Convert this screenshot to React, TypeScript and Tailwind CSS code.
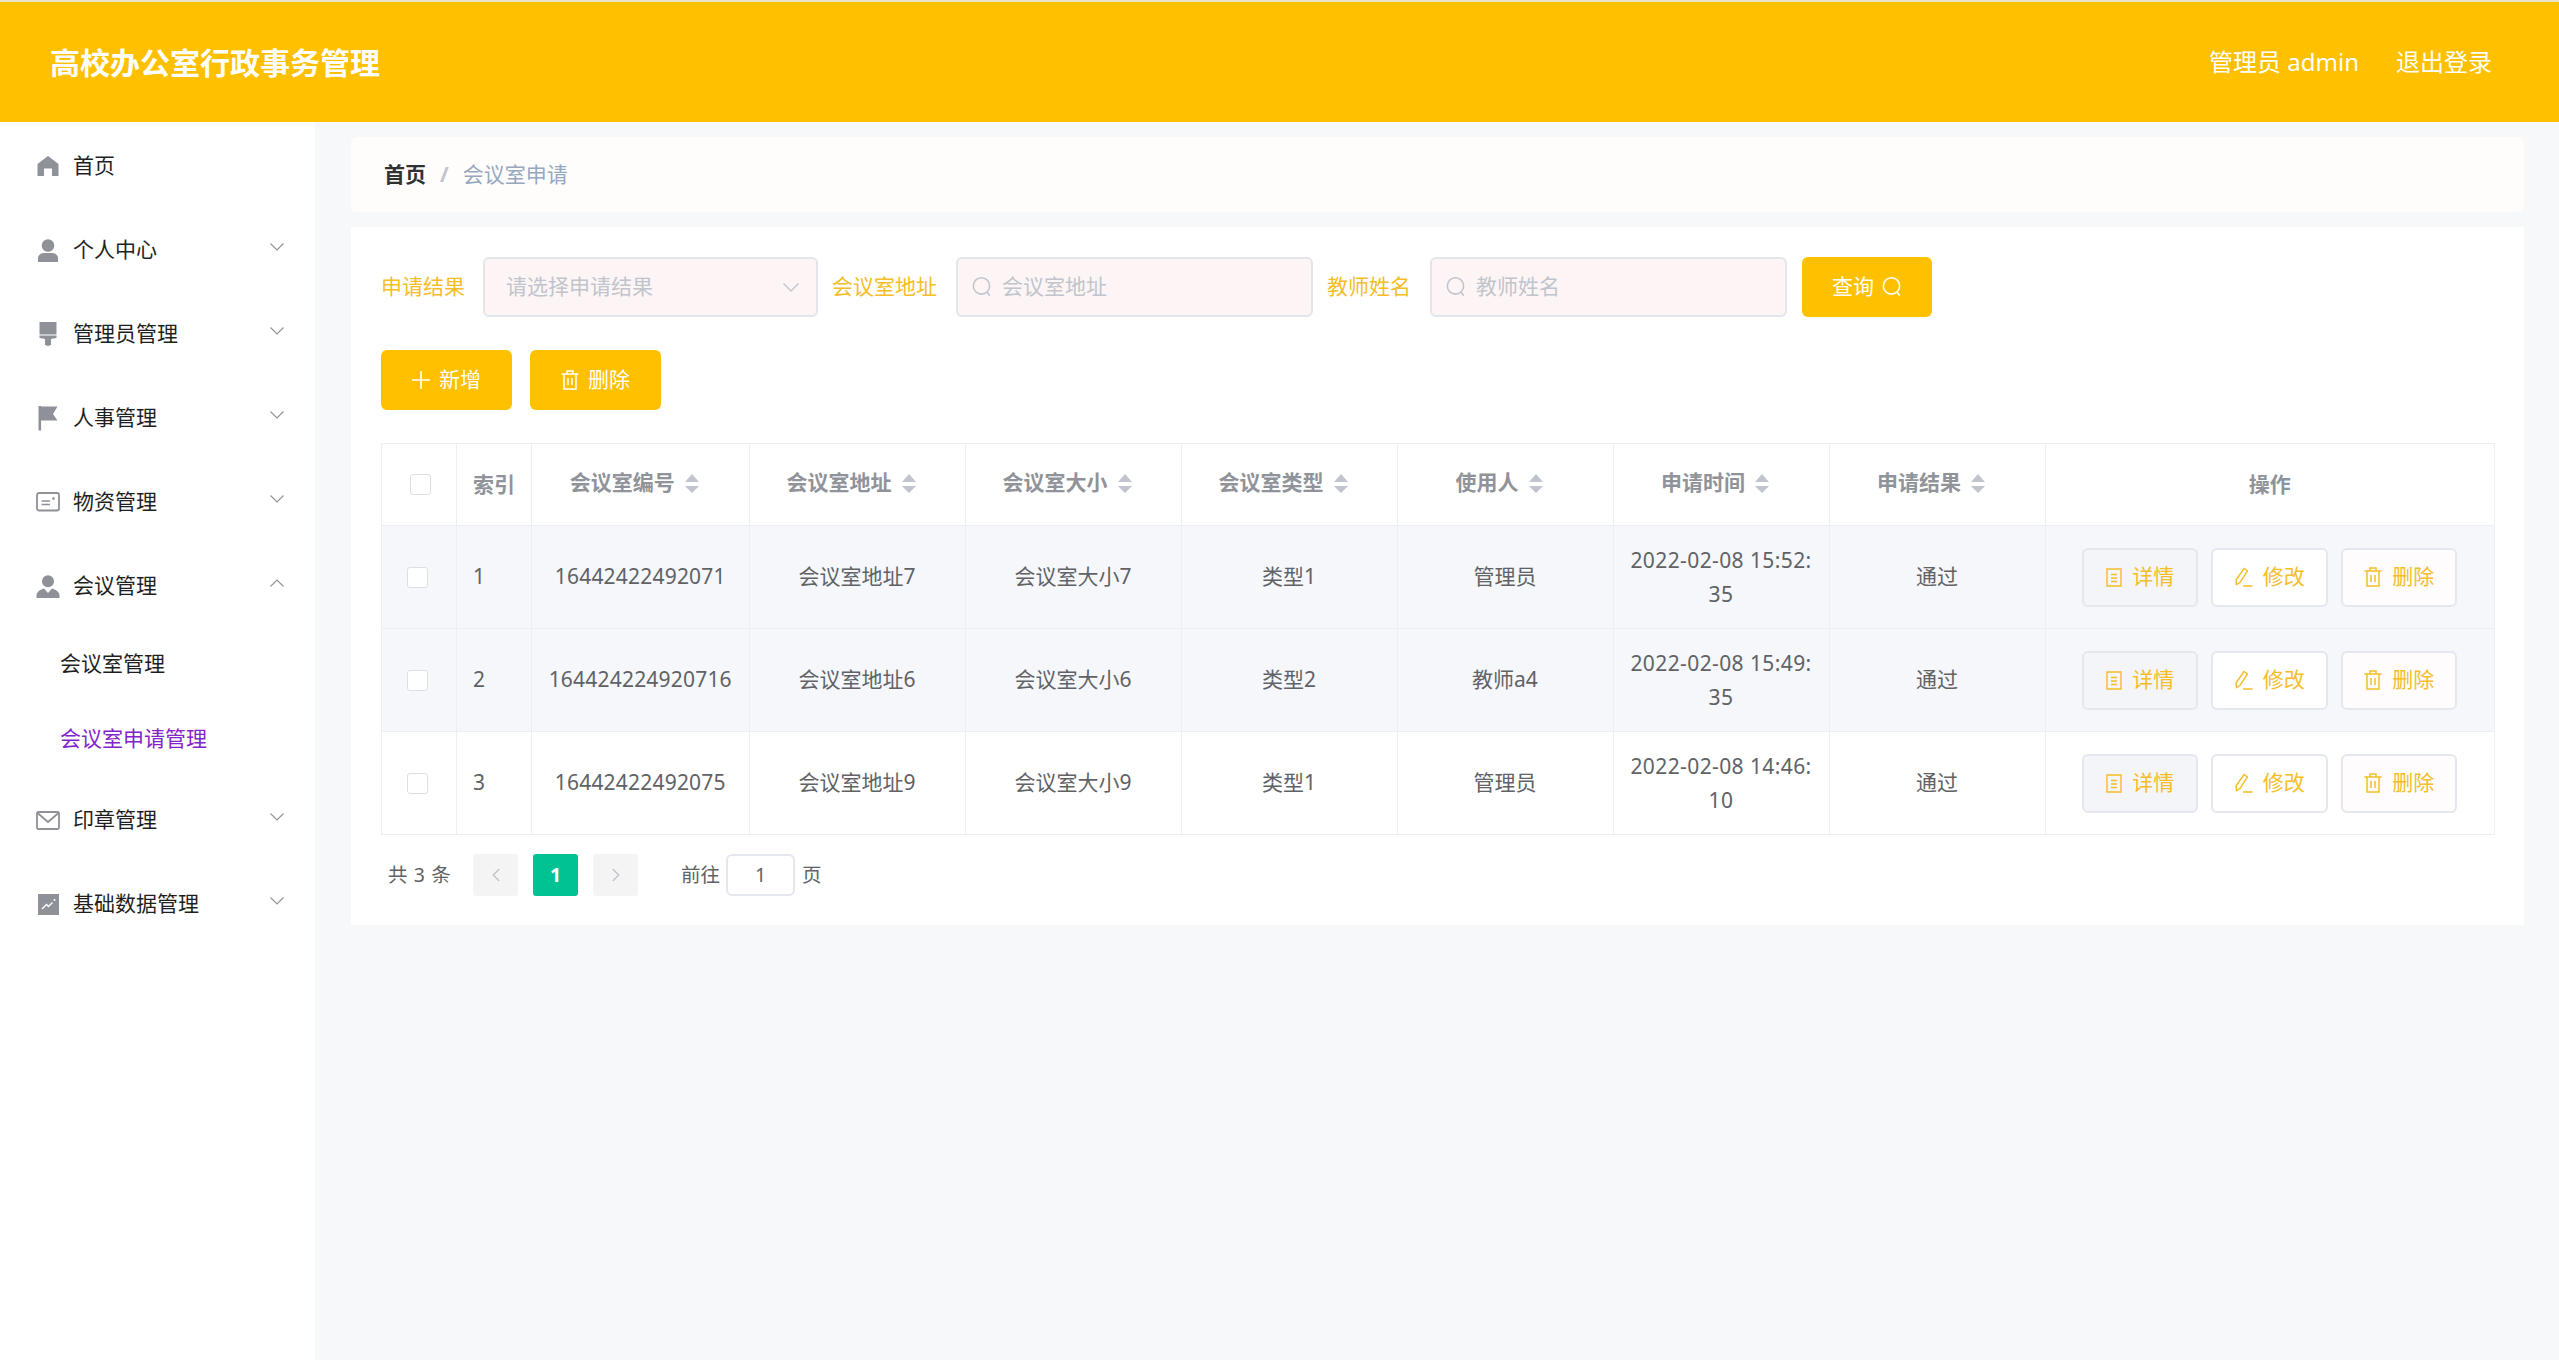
import { ChevronLeft, ChevronRight } from "lucide-react"

const gray = "#8f9199"

function IconHome() {
  return (
    <svg width="22" height="20" viewBox="0 0 22 20" fill={gray}>
      <path d="M11 0 L21.5 8 V20 H15 V12.5 H7 V20 H0.5 V8 Z" />
    </svg>
  )
}
function IconUser() {
  return (
    <svg width="22" height="23" viewBox="0 0 22 23" fill={gray}>
      <circle cx="11" cy="6.5" r="6.3" />
      <path d="M1 23 V19 C1 16 4 14 7 14 H15 C18 14 21 16 21 19 V23 Z" />
    </svg>
  )
}
function IconBrush() {
  return (
    <svg width="20" height="24" viewBox="0 0 20 24" fill={gray}>
      <rect x="1.5" y="0" width="17" height="12.5" />
      <path d="M1.5 13.5 H18.5 V16 L13 17 V23 L10 24 L7 23 V17 L1.5 16 Z" />
    </svg>
  )
}
function IconFlag() {
  return (
    <svg width="20" height="25" viewBox="0 0 20 25" fill={gray}>
      <rect x="0.5" y="0" width="2.6" height="24.5" />
      <path d="M3 0.5 H19.5 L15 8 L19.5 14.5 H3 Z" />
    </svg>
  )
}
function IconCard() {
  return (
    <svg width="24" height="20" viewBox="0 0 24 20" fill="none" stroke={gray}>
      <rect x="1" y="1" width="22" height="17.5" rx="2" strokeWidth="1.8" />
      <path d="M5.5 9 H14 M5.5 12.5 H14" strokeWidth="1.5" />
      <circle cx="17.5" cy="6.5" r="1.3" fill={gray} stroke="none" />
    </svg>
  )
}
function IconPerson() {
  return (
    <svg width="24" height="23" viewBox="0 0 24 23" fill={gray}>
      <circle cx="12" cy="6.2" r="6" />
      <path d="M0.5 23 V20 C1 16.5 4.5 14.5 8 13.5 L12 18 L16 13.5 C19.5 14.5 23 16.5 23.5 20 V23 Z" />
    </svg>
  )
}
function IconMail() {
  return (
    <svg width="24" height="19" viewBox="0 0 24 19" fill="none" stroke={gray} strokeWidth="1.8">
      <rect x="1" y="1" width="22" height="17" rx="1.5" />
      <path d="M1.5 2 L12 11 L22.5 2" />
    </svg>
  )
}
function IconChart() {
  return (
    <svg width="21" height="21" viewBox="0 0 21 21">
      <rect width="21" height="21" fill={gray} />
      <path d="M4 15 L8.5 10.5 L10.5 12.5 L14.5 8.5" fill="none" stroke="#fff" strokeWidth="1.3" />
      <circle cx="16.5" cy="6" r="1" fill="#fff" />
    </svg>
  )
}

function Arrow({ up }: { up?: boolean }) {
  return (
    <svg width="14" height="8" viewBox="0 0 14 8" fill="none" stroke="#8f9199" strokeWidth="1.1" className="mb-[6px]">
      <path d={up ? "M0.5 7.5 L7 1 L13.5 7.5" : "M0.5 0.5 L7 7 L13.5 0.5"} />
    </svg>
  )
}

function SearchIcon({ color = "#c0c4cc" }: { color?: string }) {
  return (
    <svg width="20" height="22" viewBox="0 0 19 21" fill="none" stroke={color} strokeWidth="1.5" className="shrink-0">
      <circle cx="9" cy="9.5" r="7.8" />
      <path d="M14.5 15.5 L17 19" />
    </svg>
  )
}

function PlusIcon() {
  return (
    <svg width="18" height="18" viewBox="0 0 18 18" fill="none" stroke="#fff" strokeWidth="1.6">
      <path d="M9 0 V18 M0 9 H18" />
    </svg>
  )
}

function TrashIcon({ color = "#fff" }: { color?: string }) {
  return (
    <svg width="18" height="20" viewBox="0 0 18 20" fill="none" stroke={color} strokeWidth="1.5">
      <path d="M0.5 4 H17.5 M6 4 V1 H12 V4 M3 4 V19 H15 V4 M7 8 V15 M11 8 V15" />
    </svg>
  )
}

function DocIcon() {
  return (
    <svg width="16" height="19" viewBox="0 0 16 19" fill="none" stroke="#f5bd27" strokeWidth="1.4">
      <path d="M1 1 H15 V18 H1 Z M5 6.5 H11 M5 10 H11 M5 13.5 H11" />
    </svg>
  )
}

function EditIcon() {
  return (
    <svg width="18" height="20" viewBox="0 0 18 20" fill="none" stroke="#f5bd27" strokeWidth="1.4">
      <path d="M1 13 L9 1.5 L12.5 4 L5 15.5 L1.5 17.5 Z M8 19 H17.5" />
    </svg>
  )
}

function SortCaret() {
  return (
    <svg width="14" height="19" viewBox="0 0 14 19" fill="#c0c4cc" className="ml-[10px] mr-[12px] shrink-0">
      <path d="M7 0 L14 8 H0 Z M7 19 L0 12 H14 Z" />
    </svg>
  )
}

function CheckBox() {
  return <span className="block w-[21px] h-[21px] rounded-[3px] border border-[#dcdfe6] bg-white" />
}

const menu = [
  { label: "首页", icon: <IconHome /> },
  { label: "个人中心", icon: <IconUser />, arrow: true },
  { label: "管理员管理", icon: <IconBrush />, arrow: true },
  { label: "人事管理", icon: <IconFlag />, arrow: true },
  { label: "物资管理", icon: <IconCard />, arrow: true },
  { label: "会议管理", icon: <IconPerson />, arrow: true, open: true },
  { label: "印章管理", icon: <IconMail />, arrow: true },
  { label: "基础数据管理", icon: <IconChart />, arrow: true },
]

const columns = ["会议室编号", "会议室地址", "会议室大小", "会议室类型", "使用人", "申请时间", "申请结果"]

const rows = [
  { no: "16442422492071", addr: "会议室地址7", size: "会议室大小7", type: "类型1", user: "管理员", date: "2022-02-08 15:52:", sec: "35", result: "通过" },
  { no: "164424224920716", addr: "会议室地址6", size: "会议室大小6", type: "类型2", user: "教师a4", date: "2022-02-08 15:49:", sec: "35", result: "通过" },
  { no: "16442422492075", addr: "会议室地址9", size: "会议室大小9", type: "类型1", user: "管理员", date: "2022-02-08 14:46:", sec: "10", result: "通过" },
]

export default function App() {
  return (
    <div className="h-screen overflow-hidden flex flex-col bg-[#f6f8fa] [font-family:'Noto_Sans','Noto_Sans_CJK_SC',sans-serif]">
      <header className="h-[122px] shrink-0 border-t-2 border-[#e9e2cf] bg-[#ffc000] flex items-center justify-between pl-[50px] pr-[67px] text-white">
        <h1 className="text-[30px] font-bold">高校办公室行政事务管理</h1>
        <div className="flex items-center gap-[37px] text-[24px]">
          <span>管理员 admin</span>
          <span>退出登录</span>
        </div>
      </header>

      <div className="flex flex-1 min-h-0">
        <aside className="w-[315px] shrink-0 bg-white">
          {menu.map(m => (
            <div key={m.label}>
              <div className="h-[84px] flex items-center pt-[4px] pl-[36px] pr-[31px] text-[21px] text-[#1f1f22]">
                <span className="w-[24px] flex justify-center shrink-0">{m.icon}</span>
                <span className="ml-[13px] flex-1">{m.label}</span>
                {m.arrow && <Arrow up={m.open} />}
              </div>
              {m.open && (
                <div className="text-[21px]">
                  <div className="h-[75px] flex items-center pt-[1px] pl-[60px] text-[#1f1f22]">会议室管理</div>
                  <div className="h-[75px] flex items-center pt-[1px] pl-[60px] text-[#8224c9]">会议室申请管理</div>
                </div>
              )}
            </div>
          ))}
        </aside>

        <main className="flex-1 min-w-0 pt-[15px] pl-[36px] pr-[35px]">
          <div className="h-[75px] rounded-[6px] bg-[#fffdfb] flex items-center pl-[33px] text-[21px]">
            <span className="font-bold text-[#303133]">首页</span>
            <span className="mx-[14px] text-[#c0c4cc] font-bold">/</span>
            <span className="text-[#97a8be]">会议室申请</span>
          </div>

          <section className="mt-[15px] h-[698px] bg-white p-[30px]">
            <div className="flex items-center h-[60px] text-[21px]">
              <label className="text-[#f5bd27] mr-[18px]">申请结果</label>
              <div className="w-[335px] h-[60px] rounded-[6px] border-2 border-[#e4e5ea] bg-[#fdf5f5] flex items-center justify-between pl-[21px] pr-[17px] mr-[14px]">
                <span className="text-[#c0c4cc]">请选择申请结果</span>
                <svg width="16" height="9" viewBox="0 0 16 9" fill="none" stroke="#c0c4cc" strokeWidth="1.4">
                  <path d="M0.5 0.5 L8 8 L15.5 0.5" />
                </svg>
              </div>
              <label className="text-[#f5bd27] mr-[19px]">会议室地址</label>
              <div className="w-[357px] h-[60px] rounded-[6px] border-2 border-[#e4e5ea] bg-[#fdf5f5] flex items-center pl-[14px] mr-[14px]">
                <SearchIcon />
                <input placeholder="会议室地址" className="ml-[10px] w-full outline-none bg-transparent placeholder:text-[#c0c4cc]" />
              </div>
              <label className="text-[#f5bd27] mr-[19px]">教师姓名</label>
              <div className="w-[357px] h-[60px] rounded-[6px] border-2 border-[#e4e5ea] bg-[#fdf5f5] flex items-center pl-[14px] mr-[15px]">
                <SearchIcon />
                <input placeholder="教师姓名" className="ml-[10px] w-full outline-none bg-transparent placeholder:text-[#c0c4cc]" />
              </div>
              <button className="w-[130px] h-[60px] rounded-[6px] bg-[#ffc000] text-white flex items-center justify-center gap-[8px]">
                查询 <SearchIcon color="#fff" />
              </button>
            </div>

            <div className="flex gap-[18px] mt-[33px] text-[21px] text-white">
              <button className="w-[131px] h-[60px] rounded-[6px] bg-[#ffc000] flex items-center justify-center gap-[9px]">
                <PlusIcon /> 新增
              </button>
              <button className="w-[131px] h-[60px] rounded-[6px] bg-[#ffc000] flex items-center justify-center gap-[9px]">
                <TrashIcon /> 删除
              </button>
            </div>

            <table className="mt-[33px] w-[2114px] table-fixed border-collapse text-[21px]">
              <colgroup>
                <col className="w-[75px]" />
                <col className="w-[75px]" />
                <col className="w-[217.5px]" />
                <col className="w-[216px]" />
                <col className="w-[216px]" />
                <col className="w-[216px]" />
                <col className="w-[216px]" />
                <col className="w-[216px]" />
                <col className="w-[216px]" />
                <col />
              </colgroup>
              <thead>
                <tr className="h-[82px] text-[#909399]">
                  <th className="border border-[#ebeef5]">
                    <span className="flex pl-[28px]"><CheckBox /></span>
                  </th>
                  <th className="border border-[#ebeef5] text-left pl-[16px] font-bold">索引</th>
                  {columns.map(c => (
                    <th key={c} className="border border-[#ebeef5] font-bold">
                      <span className="flex items-center justify-center mb-[3px]">
                        {c}
                        <SortCaret />
                      </span>
                    </th>
                  ))}
                  <th className="border border-[#ebeef5] font-bold">操作</th>
                </tr>
              </thead>
              <tbody className="text-[#606266]">
                {rows.map((r, i) => (
                  <tr key={r.no} className={`h-[103px] ${i < 2 ? "bg-[#f5f7fb]" : "bg-white"}`}>
                    <td className="border border-[#ebeef5]">
                      <span className="flex pl-[25px]"><CheckBox /></span>
                    </td>
                    <td className="border border-[#ebeef5] pl-[16px]">{i + 1}</td>
                    <td className="border border-[#ebeef5] text-center tracking-[0.2px]">{r.no}</td>
                    <td className="border border-[#ebeef5] text-center">{r.addr}</td>
                    <td className="border border-[#ebeef5] text-center">{r.size}</td>
                    <td className="border border-[#ebeef5] text-center">{r.type}</td>
                    <td className="border border-[#ebeef5] text-center">{r.user}</td>
                    <td className="border border-[#ebeef5] text-center leading-[34px] tracking-[0.4px]">{r.date}<br />{r.sec}</td>
                    <td className="border border-[#ebeef5] text-center">{r.result}</td>
                    <td className="border border-[#ebeef5]">
                      <div className="flex justify-center gap-[13px] text-[21px] text-[#f5bd27]">
                        <button className="w-[116px] h-[59px] rounded-[6px] border-2 border-[#e4e7ed] bg-[#f3f5f9] flex items-center justify-center gap-[10px]">
                          <DocIcon /> 详情
                        </button>
                        <button className="w-[117px] h-[59px] rounded-[6px] border-2 border-[#e4e7ed] bg-white flex items-center justify-center gap-[10px]">
                          <EditIcon /> 修改
                        </button>
                        <button className="w-[116px] h-[59px] rounded-[6px] border-2 border-[#e4e7ed] bg-[#fefcfd] flex items-center justify-center gap-[10px]">
                          <TrashIcon color="#f5bd27" /> 删除
                        </button>
                      </div>
                    </td>
                  </tr>
                ))}
              </tbody>
            </table>

            <div className="flex items-center mt-[19px] pl-[7px] text-[19.5px] text-[#606266]">
              <span className="w-[85px] tracking-[0.6px]">共 3 条</span>
              <span className="w-[45px] h-[42px] rounded-[3px] bg-[#f4f4f5] flex items-center justify-center text-[#c0c4cc]"><ChevronLeft size={22} strokeWidth={1.6} /></span>
              <span className="w-[45px] h-[42px] ml-[15px] rounded-[3px] bg-[#00c292] flex items-center justify-center text-white font-bold">1</span>
              <span className="w-[45px] h-[42px] ml-[15px] rounded-[3px] bg-[#f4f4f5] flex items-center justify-center text-[#c0c4cc]"><ChevronRight size={22} strokeWidth={1.6} /></span>
              <span className="ml-[43px]">前往</span>
              <span className="w-[69px] h-[42px] ml-[6px] rounded-[6px] border-2 border-[#e4e7ed] flex items-center justify-center">1</span>
              <span className="ml-[7px]">页</span>
            </div>
          </section>
        </main>
      </div>
    </div>
  )
}
